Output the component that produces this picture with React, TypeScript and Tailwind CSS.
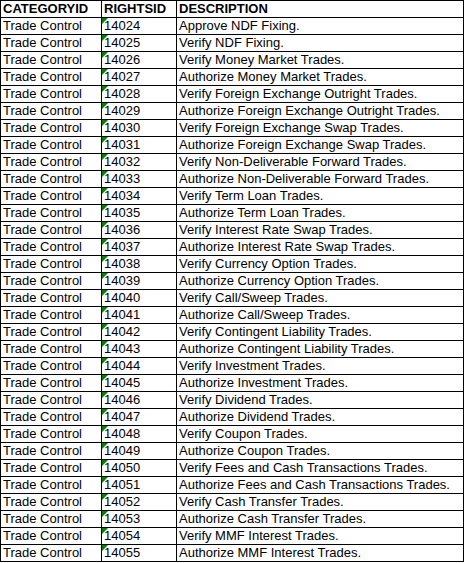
import React from "react";

const rows: [string, string][] = [
  ["14024", "Approve NDF Fixing."],
  ["14025", "Verify NDF Fixing."],
  ["14026", "Verify Money Market Trades."],
  ["14027", "Authorize Money Market Trades."],
  ["14028", "Verify Foreign Exchange Outright Trades."],
  ["14029", "Authorize Foreign Exchange Outright Trades."],
  ["14030", "Verify Foreign Exchange Swap Trades."],
  ["14031", "Authorize Foreign Exchange Swap Trades."],
  ["14032", "Verify Non-Deliverable Forward Trades."],
  ["14033", "Authorize Non-Deliverable Forward Trades."],
  ["14034", "Verify Term Loan Trades."],
  ["14035", "Authorize Term Loan Trades."],
  ["14036", "Verify Interest Rate Swap Trades."],
  ["14037", "Authorize Interest Rate Swap Trades."],
  ["14038", "Verify Currency Option Trades."],
  ["14039", "Authorize Currency Option Trades."],
  ["14040", "Verify Call/Sweep Trades."],
  ["14041", "Authorize Call/Sweep Trades."],
  ["14042", "Verify Contingent Liability Trades."],
  ["14043", "Authorize Contingent Liability Trades."],
  ["14044", "Verify Investment Trades."],
  ["14045", "Authorize Investment Trades."],
  ["14046", "Verify Dividend Trades."],
  ["14047", "Authorize Dividend Trades."],
  ["14048", "Verify Coupon Trades."],
  ["14049", "Authorize Coupon Trades."],
  ["14050", "Verify Fees and Cash Transactions Trades."],
  ["14051", "Authorize Fees and Cash Transactions Trades."],
  ["14052", "Verify Cash Transfer Trades."],
  ["14053", "Authorize Cash Transfer Trades."],
  ["14054", "Verify MMF Interest Trades."],
  ["14055", "Authorize MMF Interest Trades."],
];

export default function App() {
  return (
    <div className="w-[465px] h-[563px] bg-white text-black" style={{ fontFamily: '"Liberation Sans", Arial, sans-serif' }}>
      <div className="w-[464px] border-l border-t border-black text-[13px] leading-[16px]">
        <div className="flex h-[17px]">
          <div className="w-[101px] border-r border-b border-black pl-[2px] font-bold">CATEGORYID</div>
          <div className="w-[75px] border-r border-b border-black pl-[2px] font-bold">RIGHTSID</div>
          <div className="w-[287px] border-r border-b border-black pl-[2px] font-bold">DESCRIPTION</div>
        </div>
        {rows.map(([id, desc]) => (
          <div key={id} className="flex h-[17px]">
            <div className="w-[101px] border-r border-b border-black pl-[2px] whitespace-nowrap">Trade Control</div>
            <div className="relative w-[75px] border-r border-b border-black pl-[2px]">
              <svg className="absolute left-0 top-0" width="6" height="6" viewBox="0 0 6 6">
                <polygon points="0,0 6,0 0,6" fill="#008000" />
              </svg>
              {id}
            </div>
            <div className="w-[287px] border-r border-b border-black pl-[2px] whitespace-nowrap">{desc}</div>
          </div>
        ))}
      </div>
    </div>
  );
}
